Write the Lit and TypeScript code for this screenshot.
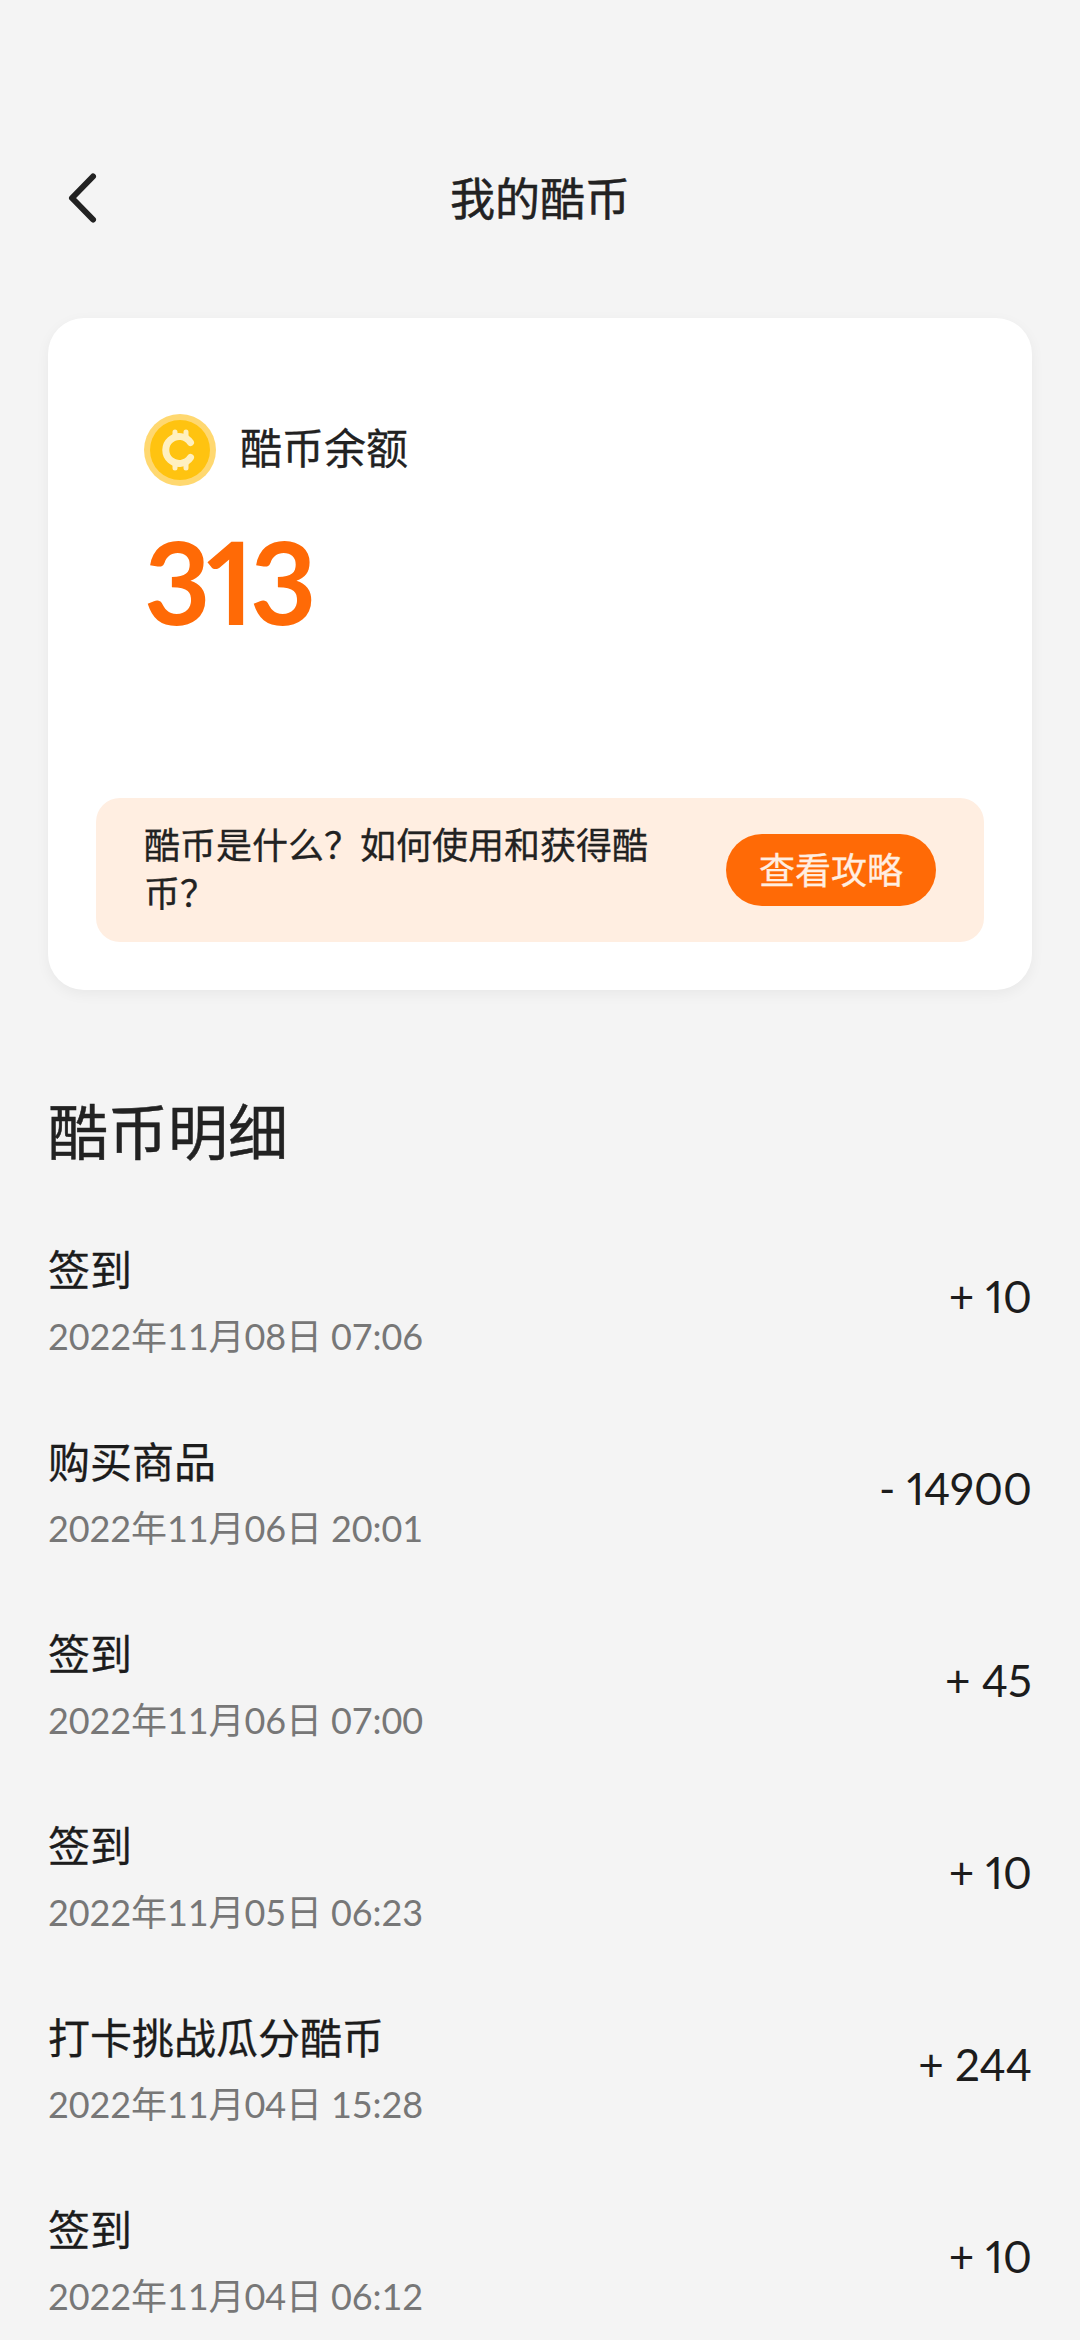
import { LitElement, html, css } from "lit";
import { customElement } from "lit/decorators.js";

const rows = [
  ["签到", "2022年11月08日 07:06", "+ 10"],
  ["购买商品", "2022年11月06日 20:01", "- 14900"],
  ["签到", "2022年11月06日 07:00", "+ 45"],
  ["签到", "2022年11月05日 06:23", "+ 10"],
  ["打卡挑战瓜分酷币", "2022年11月04日 15:28", "+ 244"],
  ["签到", "2022年11月04日 06:12", "+ 10"],
];

@customElement("app-root")
export class AppRoot extends LitElement {
  static styles = css`
    :host { display: block; width: 1080px; height: 2340px; overflow: hidden; background: #f4f4f4; color: #1c1c1c;
      font-family: "Noto Sans", "Noto Sans CJK SC", sans-serif; }
    .nav { height: 318px; padding-top: 158px; box-sizing: border-box; display: block; }
    .navrow { height: 82px; display: grid; grid-template-columns: 48px 1fr 48px; align-items: center; padding: 0 48px; }
    .back { width: 44px; height: 56px; display: block; margin: -3px 0 0 16px; }
    .title { text-align: center; font-size: 45px; line-height: 82px; font-weight: 400; color: #222; -webkit-text-stroke: 0.5px #222; }
    .card { margin: 0 48px; height: 672px; box-sizing: border-box; background: #fff; border-radius: 36px; padding: 96px 48px 48px; box-shadow: 0 4px 14px rgba(0,0,0,.05); display: flex; flex-direction: column; }
    .head { display: flex; align-items: center; gap: 24px; padding-left: 48px; height: 72px; }
    .coin { width: 72px; height: 72px; display: block; }
    .bal { font-size: 42px; line-height: 56px; font-weight: 400; color: #222; padding-bottom: 4px; -webkit-text-stroke: 0.3px #222; }
    .num { padding-left: 48px; margin-top: 29px; font-size: 115px; line-height: 130px; font-weight: 700; letter-spacing: -4px; color: #ff6a06; font-family: "Lato", sans-serif; font-variant-numeric: proportional-nums; }
    .tip { margin-top: auto; height: 144px; background: #ffeee1; border-radius: 24px; display: flex; align-items: center; justify-content: space-between; padding: 0 48px; box-sizing: border-box; }
    .tip p { margin: 0; width: 510px; font-size: 36px; line-height: 48px; color: #222; -webkit-text-stroke: 0.3px #222; }
    .btn { width: 210px; height: 72px; box-sizing: border-box; padding-bottom: 4px; border-radius: 36px; background: #ff6a06; color: #ffeee1; font-size: 36px; display: flex; align-items: center; justify-content: center; -webkit-text-stroke: 0.3px #ffeee1; }
    h2 { margin: 0; padding: 0 48px; font-size: 60px; line-height: 84px; font-weight: 400; margin-top: 100px; color: #222; -webkit-text-stroke: 0.5px #222; }
    .list { padding: 0 48px; margin-top: 46px; }
    .row { height: 192px; display: flex; justify-content: space-between; align-items: center; box-sizing: border-box; padding-bottom: 32px; }
    .name { font-size: 42px; line-height: 56px; color: #1c1c1c; -webkit-text-stroke: 0.3px #1c1c1c; }
    .date { font-size: 36px; line-height: 46px; margin-top: 15px; color: #777; letter-spacing: -0.1px; font-family: "Lato", "Noto Sans CJK SC", sans-serif; }
    .amt { font-size: 44px; color: #1c1c1c; font-family: "Lato", sans-serif; font-variant-numeric: proportional-nums; padding-bottom: 9px; }
  `;
  render() {
    return html`
      <div class="nav"><div class="navrow">
        <svg class="back" viewBox="0 0 44 56"><path d="M29 6.5 L8 28 L29 49.5" fill="none" stroke="#222" stroke-width="6" stroke-linecap="round" stroke-linejoin="round"/></svg>
        <div class="title">我的酷币</div><span></span>
      </div></div>
      <section class="card">
        <div class="head">
          <svg class="coin" viewBox="0 0 72 72">
            <circle cx="36" cy="36" r="36" fill="#ffd870"/><circle cx="36" cy="36" r="30" fill="#ffc310"/>
            <path d="M46.5 28.5 A13.5 13.5 0 1 0 46.5 43.5" fill="none" stroke="#fff0c0" stroke-width="7" stroke-linecap="round"/>
            <path d="M31 18v6M42 18v6M31 48v6M42 48v6" stroke="#fff0c0" stroke-width="5" stroke-linecap="round"/>
          </svg>
          <div class="bal">酷币余额</div>
        </div>
        <div class="num">313</div>
        <div class="tip"><p>酷币是什么？如何使用和获得酷币？</p><div class="btn">查看攻略</div></div>
      </section>
      <h2>酷币明细</h2>
      <div class="list">
        ${rows.map(r => html`<div class="row"><div><div class="name">${r[0]}</div><div class="date">${r[1]}</div></div><div class="amt">${r[2]}</div></div>`)}
      </div>
    `;
  }
}
